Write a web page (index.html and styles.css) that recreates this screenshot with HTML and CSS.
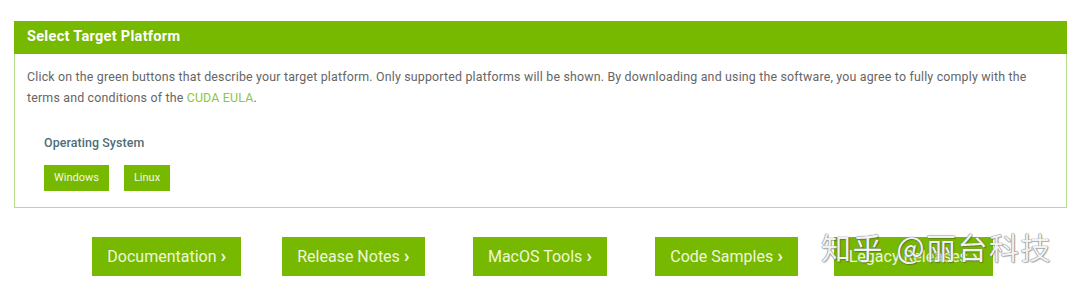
FILE: index.html
```html
<!DOCTYPE html>
<html lang="en">
<head>
<meta charset="utf-8">
<title>Select Target Platform</title>
<link rel="stylesheet" href="styles.css">
</head>
<body>
<div class="page">
  <section class="panel">
    <header class="panel-head">Select Target Platform</header>
    <div class="panel-body">
      <p class="intro">Click on the green buttons that describe your target platform. Only supported platforms will be shown. By downloading and using the software, you agree to fully comply with the terms and conditions of the <a class="link" href="#">CUDA EULA</a>.</p>
      <div class="os">
        <div class="os-label">Operating System</div>
        <div class="os-buttons">
          <span class="os-btn">Windows</span>
          <span class="os-btn">Linux</span>
        </div>
      </div>
    </div>
  </section>
  <nav class="links">
    <a class="link-btn" href="#">Documentation<span class="chev">›</span></a>
    <a class="link-btn" href="#">Release Notes<span class="chev">›</span></a>
    <a class="link-btn" href="#">MacOS Tools<span class="chev">›</span></a>
    <a class="link-btn" href="#">Code Samples<span class="chev">›</span></a>
    <a class="link-btn" href="#">Legacy Releases<span class="chev">›</span></a>
  </nav>
  <div class="watermark">知乎 @丽台科技</div>
</div>
</body>
</html>
```

FILE: styles.css
```css
html, body {
  margin: 0;
  padding: 0;
  background: #ffffff;
}
body {
  font-family: "Roboto", "Liberation Sans", sans-serif;
}
.page {
  position: relative;
  width: 1080px;
  height: 290px;
  padding-top: 21px;
  box-sizing: border-box;
}
.panel {
  margin-left: 14px;
  width: 1053px;
  box-sizing: border-box;
  border: 1px solid #b7dc8c;
  border-top: none;
}
.panel-head {
  background: #76b900;
  color: #ffffff;
  font-weight: 700;
  font-size: 14.5px;
  letter-spacing: 0.3px;
  height: 33px;
  line-height: 31px;
  padding-left: 13px;
  margin: 0 -1px 0 -1px;
}
.panel-body {
  padding: 12px 12px 16px 12px;
}
.intro {
  margin: 0;
  font-size: 12.4px;
  letter-spacing: 0.18px;
  line-height: 21px;
  color: #666666;
}
.link {
  color: #8cc63f;
  text-decoration: none;
}
.os {
  padding: 27px 0 0 17px;
}
.os-label {
  font-size: 12.4px;
  font-weight: 500;
  color: #4d6e77;
  line-height: 16px;
  letter-spacing: 0.1px;
}
.os-buttons {
  display: flex;
  gap: 15px;
  margin-top: 14px;
}
.os-btn {
  background: #76b900;
  color: #f0f8e4;
  font-size: 11px;
  height: 26px;
  line-height: 26px;
  padding: 0 10px;
}
.links {
  display: grid;
  grid-template-columns: repeat(5, 186.6px);
  justify-content: center;
  justify-items: center;
  margin-top: 29px;
}
.link-btn {
  display: flex;
  align-items: center;
  background: #76b900;
  color: #eef6dc;
  text-decoration: none;
  font-size: 16px;
  height: 39px;
  padding: 0 15px;
  box-sizing: border-box;
}
.chev {
  font-weight: 700;
  font-size: 19px;
  margin-left: 4px;
  line-height: 1;
  margin-top: -2px;
}
.watermark {
  position: absolute;
  left: 821px;
  top: 226px;
  font-family: "Noto Sans CJK SC", sans-serif;
  font-size: 30px;
  color: rgba(255, 255, 255, 0.92);
  text-shadow: 0 0 1px #6d6d6d, 0 0 1px #6d6d6d, 1px 1px 1px rgba(0,0,0,0.25);
  letter-spacing: 1.5px;
  word-spacing: 4px;
  line-height: 40px;
}
```
